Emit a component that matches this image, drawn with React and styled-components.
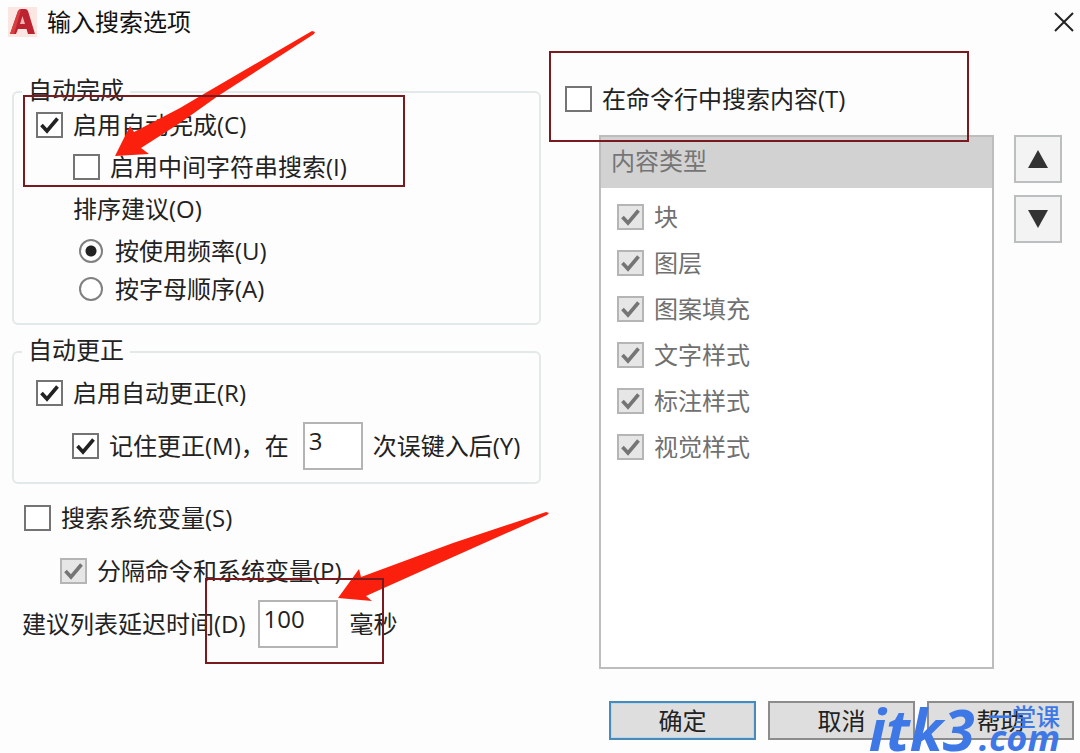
import React from "react";
import styled, { createGlobalStyle } from "styled-components";

const GlobalStyle = createGlobalStyle`
  *, *::before, *::after { box-sizing: border-box; }
  body { margin: 0; background: #fdfdfd; }
  body, input, button {
    font-family: "Open Sans", "Noto Sans CJK SC", sans-serif;
    font-size: 24px;
    line-height: 34px;
    color: #222;
  }
`;

const Dialog = styled.main`
  position: relative;
  display: flex;
  flex-direction: column;
  min-height: 100vh;
  overflow: hidden;
`;

const TitleBar = styled.header`
  display: flex;
  align-items: center;
  gap: 10px;
  height: 44px;
  padding: 0 5px 0 8px;
`;

const Title = styled.h1`
  flex: 1;
  margin: 0;
  font-size: 24px;
  font-weight: 400;
  color: #111;
`;

const CloseButton = styled.button`
  display: flex;
  padding: 0;
  border: 0;
  background: none;
`;

const Body = styled.div`
  flex: 1;
  display: grid;
  grid-template-columns: minmax(0, 529fr) minmax(0, 497fr);
  gap: 24px;
  padding: 32px 18px 0 12px;
`;

const Settings = styled.div`
  display: flex;
  flex-direction: column;
`;

const Group = styled.fieldset`
  min-width: 0;
  margin: 0 0 11px;
  padding: 0 0 ${(p) => p.$bottom}px 8px;
  border: 2px solid #e3e8e9;
  border-radius: 6px;
`;

const Legend = styled.legend`
  padding: 0 6px 4px;
  line-height: 28px;
`;

const Stack = styled.div`
  display: flex;
  flex-direction: column;
  gap: ${(p) => p.$gap}px;
  padding: ${(p) => p.$pad || "0"};
`;

const Row = styled.div`
  display: flex;
  align-items: center;
  padding-left: ${(p) => p.$indent || 0}px;
  white-space: nowrap;
`;

const Choice = styled.label`
  display: flex;
  align-items: center;
  gap: ${(p) => p.$gap || 10}px;
  white-space: nowrap;
  color: ${(p) => (p.$muted ? "#707070" : "inherit")};
`;

const CheckMark = styled.span`
  position: relative;
  display: flex;
  flex: none;
  svg { position: absolute; inset: 0; pointer-events: none; }
`;

const CheckInput = styled.input`
  appearance: none;
  width: 27px;
  height: 26px;
  margin: 0;
  border: 2px solid #747474;
  background: #fff;
  &:disabled { border-color: #b5b5b5; background: #e6e6e6; }
`;

const RadioInput = styled.input`
  appearance: none;
  flex: none;
  width: 24px;
  height: 24px;
  margin: 0;
  border: 2px solid #808080;
  border-radius: 50%;
  background: ${(p) =>
    p.defaultChecked ? "radial-gradient(circle, #222 5px, #fff 6px)" : "#fff"};
`;

const NumberBox = styled.input`
  width: ${(p) => p.$width}px;
  height: 48px;
  margin: 0 ${(p) => p.$right}px 0 ${(p) => p.$left}px;
  padding: 0 4px 12px;
  border: 2px solid #b4b4b4;
  border-radius: 0;
  background: #fff;
`;

const Content = styled.section`
  display: flex;
  flex-direction: column;
  gap: 19px;
  padding-top: 6px;
`;

const ContentArea = styled.div`
  flex: 1;
  display: flex;
  align-items: stretch;
  gap: 20px;
  padding-left: 34px;
`;

const ListBox = styled.div`
  flex: 1;
  border: 2px solid #bdbdbd;
  background: #fff;
`;

const ListHeader = styled.h2`
  margin: 0;
  padding: 7px 10px 10px;
  background: #d2d2d2;
  font-size: 24px;
  font-weight: 400;
  color: #757575;
`;

const OrderButtons = styled.div`
  display: flex;
  flex-direction: column;
  gap: 12px;
`;

const OrderButton = styled.button`
  display: flex;
  align-items: center;
  justify-content: center;
  width: 48px;
  height: 48px;
  padding: 0;
  border: 2px solid #bcbfc0;
  background: #f3f3f3;
`;

const Footer = styled.footer`
  display: flex;
  justify-content: flex-end;
  gap: 12px;
  padding: 32px 6px 13px;
`;

const FooterButton = styled.button`
  width: 147px;
  height: 39px;
  padding: 0;
  border: 2px solid ${(p) => (p.$primary ? "#4a8ab8" : "#8c8c8c")};
  background: #dedede;
  box-shadow: ${(p) => (p.$primary ? "inset 0 0 0 1px #b9d9ee" : "none")};
`;

const Highlight = styled.div`
  position: absolute;
  left: ${(p) => p.$x}px;
  top: ${(p) => p.$y}px;
  width: ${(p) => p.$w}px;
  height: ${(p) => p.$h}px;
  border: 2px solid #7b1a1e;
  pointer-events: none;
`;

const Arrows = styled.svg`
  position: absolute;
  left: 0;
  top: 0;
  pointer-events: none;
`;

const Watermark = styled.div`
  position: absolute;
  right: 20px;
  bottom: 0;
  display: flex;
  align-items: flex-end;
  gap: 4px;
  height: 50px;
  color: #3d78e6;
  font-family: "Open Sans", "Noto Sans CJK SC", sans-serif;
  font-weight: 700;
  pointer-events: none;
`;

const WatermarkName = styled.span`
  font-size: 58px;
  font-style: italic;
  line-height: 48px;
`;

const WatermarkSide = styled.span`
  display: flex;
  flex-direction: column;
  align-items: flex-end;
`;

const WatermarkTop = styled.span`
  font-size: 24px;
  font-weight: 500;
  line-height: 12px;
`;

const WatermarkDomain = styled.span`
  font-size: 36px;
  font-style: italic;
  line-height: 30px;
`;

function Check({ label, disabled, checked, muted }) {
  return (
    <Choice $muted={muted}>
      <CheckMark>
        <CheckInput type="checkbox" defaultChecked={checked} disabled={disabled} />
        {checked && (
          <svg width="27" height="26" viewBox="0 0 27 26" fill="none">
            <path d="M5.500 13L11 19L21.500 6.500" stroke={disabled ? "#757575" : "#222"} strokeWidth="3.600" />
          </svg>
        )}
      </CheckMark>
      {label}
    </Choice>
  );
}

function Radio({ label, checked }) {
  return (
    <Choice $gap={12}>
      <RadioInput type="radio" name="sort" defaultChecked={checked} />
      {label}
    </Choice>
  );
}

const contentTypes = ["块", "图层", "图案填充", "文字样式", "标注样式", "视觉样式"];

export default function App() {
  return (
    <Dialog>
      <GlobalStyle />
      <TitleBar>
        <svg width="29" height="30" viewBox="0 0 29 30" aria-hidden="true">
          <rect width="29" height="30" fill="#fbe6e1" />
          <path d="M2 27L10 4Q11 2 13 2H17Q19 2 20 4L27 27H20L18.500 22H10L8 27Z" fill="#bd2230" />
          <path d="M12 17L14.500 9L17 17Z" fill="#f0b5b0" />
          <path d="M2 27L10 4L13 3L6 27Z" fill="#d8403f" />
        </svg>
        <Title>输入搜索选项</Title>
        <CloseButton aria-label="关闭">
          <svg width="22" height="22" viewBox="0 0 22 22">
            <path d="M2 2L20 20M20 2L2 20" stroke="#222" strokeWidth="2" />
          </svg>
        </CloseButton>
      </TitleBar>

      <Body>
        <Settings>
          <Group $bottom={17}>
            <Legend>自动完成</Legend>
            <Stack $gap={8} $pad="0 0 0 14px">
              <Row><Check label="启用自动完成(C)" checked /></Row>
              <Row $indent={37}><Check label="启用中间字符串搜索(I)" /></Row>
              <Row $indent={37}>排序建议(O)</Row>
              <Stack $gap={4} $pad="0 0 0 43px">
                <Radio label="按使用频率(U)" checked />
                <Radio label="按字母顺序(A)" />
              </Stack>
            </Stack>
          </Group>

          <Group $bottom={12}>
            <Legend>自动更正</Legend>
            <Stack $gap={12} $pad="8px 0 0 14px">
              <Row><Check label="启用自动更正(R)" checked /></Row>
              <Row $indent={36}>
                <Check label="记住更正(M)，在" checked />
                <NumberBox $width={60} $left={14} $right={10} defaultValue="3" aria-label="误键入次数" />
                次误键入后(Y)
              </Row>
            </Stack>
          </Group>

          <Stack $gap={19} $pad="6px 0 0 12px">
            <Row><Check label="搜索系统变量(S)" /></Row>
            <Row $indent={36}><Check label="分隔命令和系统变量(P)" checked disabled /></Row>
          </Stack>
          <Stack $pad="12px 0 0 10px">
            <Row>
              <label htmlFor="delay">建议列表延迟时间(D)</label>
              <NumberBox id="delay" $width={80} $left={12} $right={12} defaultValue="100" />
              毫秒
            </Row>
          </Stack>
        </Settings>

        <Content>
          <Check label="在命令行中搜索内容(T)" />
          <ContentArea>
            <ListBox>
              <ListHeader>内容类型</ListHeader>
              <Stack $gap={12} $pad="12px 16px">
                {contentTypes.map((name) => (
                  <Check key={name} label={name} checked disabled muted />
                ))}
              </Stack>
            </ListBox>
            <OrderButtons>
              <OrderButton aria-label="上移">
                <svg width="20" height="18" viewBox="0 0 20 18"><path d="M10 0L20 18H0Z" fill="#333" /></svg>
              </OrderButton>
              <OrderButton aria-label="下移">
                <svg width="20" height="18" viewBox="0 0 20 18"><path d="M0 0H20L10 18Z" fill="#333" /></svg>
              </OrderButton>
            </OrderButtons>
          </ContentArea>
        </Content>
      </Body>

      <Footer>
        <FooterButton $primary>确定</FooterButton>
        <FooterButton>取消</FooterButton>
        <FooterButton>帮助</FooterButton>
      </Footer>

      <Arrows width="560" height="620" viewBox="0 0 560 620" aria-hidden="true">
        <path d="M312 31L315 32L314 34L218 96L180 123L141 148L149 154L115 156L130 126L134 132L180 108L202 95Z" fill="#fb1f0e" />
        <path d="M546 512L549 513L547 515L453 557L366 596L372 601L338 598L359 569L361 577L453 543Z" fill="#fb1f0e" />
      </Arrows>
      <Highlight $x={23} $y={95} $w={382} $h={92} />
      <Highlight $x={549} $y={51} $w={420} $h={91} />
      <Highlight $x={205} $y={578} $w={179} $h={86} />

      <Watermark>
        <WatermarkName>itk3</WatermarkName>
        <WatermarkSide>
          <WatermarkTop>一堂课</WatermarkTop>
          <WatermarkDomain>.com</WatermarkDomain>
        </WatermarkSide>
      </Watermark>
    </Dialog>
  );
}
